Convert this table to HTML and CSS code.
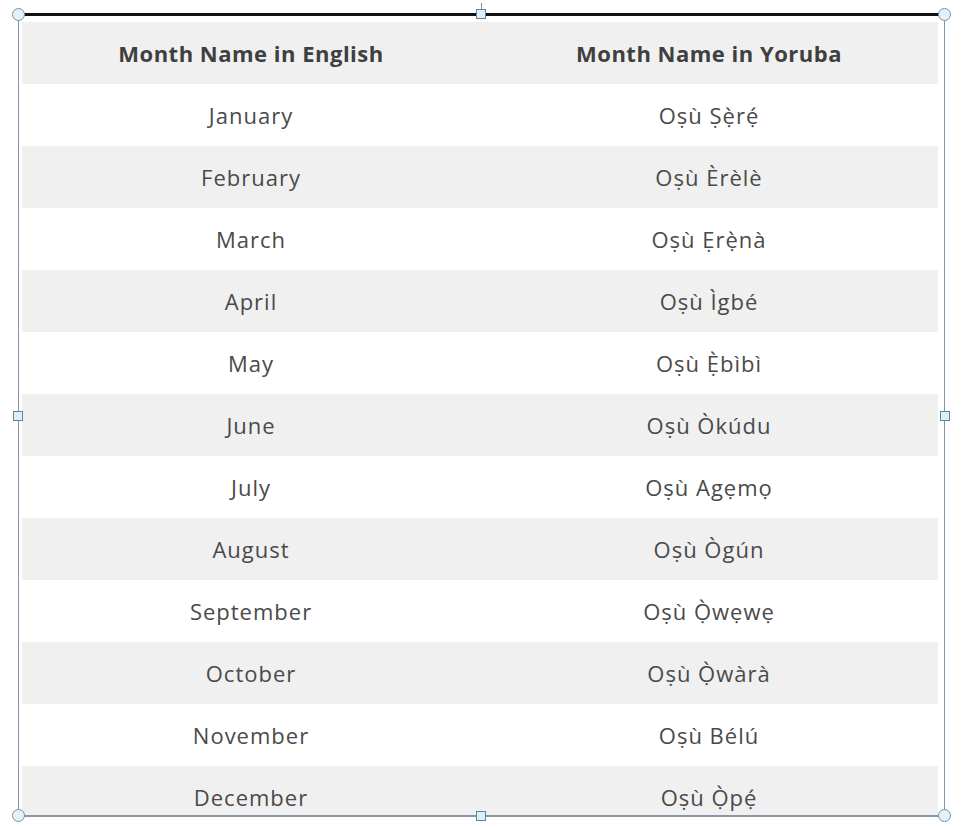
FILE: index.html
```html
<!DOCTYPE html>
<html lang="en">
<head>
<meta charset="utf-8">
<title>Months in Yoruba</title>
<link rel="stylesheet" href="styles.css">
</head>
<body>
<div class="stage">
  <div class="frame">
    <div class="inner">
      <table class="months">
        <thead>
          <tr><th>Month Name in English</th><th>Month Name in Yoruba</th></tr>
        </thead>
        <tbody>
          <tr><td>January</td><td>Oṣù Ṣẹ̀rẹ́</td></tr>
          <tr><td>February</td><td>Oṣù Èrèlè</td></tr>
          <tr><td>March</td><td>Oṣù Ẹrẹ̀nà</td></tr>
          <tr><td>April</td><td>Oṣù Ìgbé</td></tr>
          <tr><td>May</td><td>Oṣù Ẹ̀bìbì</td></tr>
          <tr><td>June</td><td>Oṣù Òkúdu</td></tr>
          <tr><td>July</td><td>Oṣù Agẹmọ</td></tr>
          <tr><td>August</td><td>Oṣù Ògún</td></tr>
          <tr><td>September</td><td>Oṣù Ọ̀wẹwẹ</td></tr>
          <tr><td>October</td><td>Oṣù Ọ̀wàrà</td></tr>
          <tr><td>November</td><td>Oṣù Bélú</td></tr>
          <tr><td>December</td><td>Oṣù Ọ̀pẹ́</td></tr>
        </tbody>
      </table>
    </div>
    <span class="handle circle tl"></span>
    <span class="handle circle tr"></span>
    <span class="handle circle bl"></span>
    <span class="handle circle br"></span>
    <span class="rot-tick"></span>
    <span class="handle square tm"></span>
    <span class="handle square ml"></span>
    <span class="handle square mr"></span>
    <span class="handle square bm"></span>
  </div>
</div>
</body>
</html>
```
FILE: styles.css
```css
html, body {
  margin: 0;
  padding: 0;
  background: #ffffff;
}

.stage {
  padding-top: 13px;
  padding-left: 18px;
  width: 962px;
  height: 827px;
  box-sizing: border-box;
}

.frame {
  position: relative;
  width: 927px;
  height: 804px;
  box-sizing: border-box;
  border-top: 3px solid #111111;
  border-left: 1px solid #8094aa;
  border-right: 1px solid #8094aa;
  border-bottom: 2px solid #8797a8;
}

.inner {
  height: 100%;
  box-sizing: border-box;
  padding: 6px 6px 3px 3px;
  overflow: hidden;
}

.months {
  width: 916px;
  border-collapse: collapse;
  table-layout: fixed;
  font-family: "Open Sans", "Noto Sans", sans-serif;
  font-size: 22px;
  letter-spacing: 1px;
  color: #4a4a4a;
}

.months th,
.months td {
  height: 62px;
  padding: 0;
  text-align: center;
  vertical-align: middle;
}

.months th {
  font-weight: 700;
  font-size: 22px;
  letter-spacing: 0.5px;
  color: #3f3f3f;
  background: #f0f0f0;
}

.months td {
  font-weight: 400;
}

.months tbody tr:nth-child(even) td {
  background: #f0f0f0;
}

.handle {
  position: absolute;
  box-sizing: border-box;
}

.circle {
  width: 13px;
  height: 13px;
  border-radius: 50%;
  background: #e3f2f8;
  border: 1px solid #7a8ea3;
}

.square {
  width: 10px;
  height: 10px;
  background: #d9f1fb;
  border: 1px solid #6b7f95;
}

.tl { left: -7px; top: -8px; }
.tr { right: -7px; top: -8px; }
.bl { left: -7px; bottom: -7px; }
.br { right: -7px; bottom: -7px; }

.tm { left: 457px; top: -7px; }
.bm { left: 457px; bottom: -6px; }
.ml { left: -6px; top: 395px; }
.mr { right: -6px; top: 395px; }

.rot-tick {
  position: absolute;
  left: 462px;
  top: -13px;
  width: 1px;
  height: 7px;
  background: #7a8ea3;
}
```
